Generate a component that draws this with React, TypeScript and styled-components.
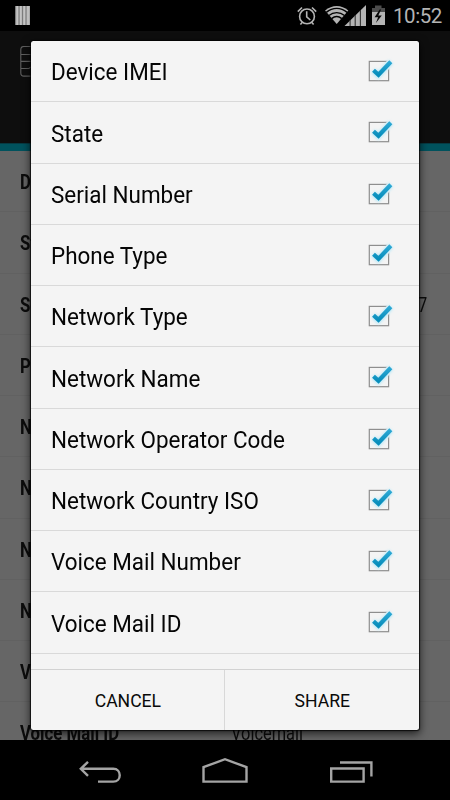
import React from 'react';
import styled, { createGlobalStyle } from 'styled-components';

const GlobalStyle = createGlobalStyle`
  * { box-sizing: border-box; }
  html, body { margin: 0; padding: 0; background: #000; }
  body { overflow: hidden; }
`;

const Screen = styled.div`
  position: relative;
  width: 450px;
  height: 800px;
  overflow: hidden;
  display: flex;
  flex-direction: column;
  background: #000;
  font-family: Roboto, "Noto Sans", sans-serif;
`;

const StatusBar = styled.header`
  height: 31px;
  flex: none;
  display: flex;
  justify-content: space-between;
  color: #b4b4b4;
`;

const StatusGroup = styled.div`
  display: flex;
  height: 31px;
`;

const Clock = styled.span`
  width: 57px;
  font-size: 20.5px;
  line-height: 33px;
  letter-spacing: -0.45px;
  white-space: nowrap;
`;

const ActionBar = styled.div`
  height: 112px;
  flex: none;
  background: #0e0e0e;
  padding: 15px 0 0 20px;
`;

const TabIndicator = styled.div`
  height: 8px;
  flex: none;
  background: #00525d;
  border-top: 1px solid #063a42;
`;

const Content = styled.main`
  height: 589px;
  flex: none;
  overflow: hidden;
  background: #666;
`;

const InfoRow = styled.div`
  display: grid;
  grid-template-columns: 211px 1fr;
  align-items: center;
  height: 61.25px;
  padding: 2px 0 0 20px;
  border-bottom: 1px solid #616161;
  color: #0c0c0c;
  font-size: 20px;
  white-space: nowrap;
`;

const InfoLabel = styled.span`
  font-weight: 700;
  transform: scaleX(0.84);
  transform-origin: left;
`;

const InfoValue = styled.span<{ $end?: boolean }>`
  transform: scaleX(0.82);
  transform-origin: ${(p) => (p.$end ? 'right' : 'left')};
  justify-self: ${(p) => (p.$end ? 'end' : 'start')};
  margin-right: ${(p) => (p.$end ? '23px' : '0')};
`;

const NavBar = styled.nav`
  height: 60px;
  flex: none;
  background: #000;
`;

const Dialog = styled.section`
  position: absolute;
  left: 31.4px;
  top: 41px;
  width: 387.8px;
  height: 689px;
  display: flex;
  flex-direction: column;
  overflow: hidden;
  border-radius: 2.5px;
  background: #f4f4f4;
  box-shadow: 0 0 1px 1px rgba(0, 0, 0, 0.75), 0 3px 8px 1px rgba(0, 0, 0, 0.65);
`;

const OptionList = styled.div`
  height: 628px;
  flex: none;
  overflow: hidden;
`;

const Option = styled.label`
  display: flex;
  align-items: center;
  justify-content: space-between;
  height: 61.25px;
  padding: 1px 24px 0 20px;
  border-bottom: 1.3px solid #d9d9d9;
  color: #050505;
  font-size: 23.2px;
  line-height: 28px;
  white-space: nowrap;
`;

const OptionText = styled.span`
  padding-top: 1.4px;
  transform: scaleX(0.968);
  transform-origin: left;
`;

const Actions = styled.footer`
  display: grid;
  grid-template-columns: 194px 1fr;
  height: 61px;
  border-top: 1px solid #d2d2d2;
`;

const ActionButton = styled.button`
  border: 0;
  border-right: 1px solid #d8d8d8;
  padding: 2px 0 0;
  background: transparent;
  color: #090909;
  font: 400 17.6px Roboto, sans-serif;
  &:last-child { border-right: 0; }
`;

const NotificationIcon = () => (
  <svg width="40" height="31">
    <rect x="15" y="6" width="15" height="19" fill="#aaa" />
    <path d="M15.5 6v19M19 6v19M22.5 6v19M26 6v19" stroke="#777" strokeWidth=".9" />
    <path d="M17.3 6v19M20.8 6v19M24.3 6v19M28 6v19" stroke="#c4c4c4" strokeWidth="1.6" />
  </svg>
);

const StatusIcons = () => (
  <svg width="97" height="31" viewBox="296 0 97 31">
    <g fill="none" stroke="#b4b4b4" strokeWidth="1.6">
      <circle cx="307" cy="16.4" r="7.4" />
      <path d="M306.7 11.3v5.5l3.6 3.2M297.8 11.6l4.2-4.1M312 7.5l4.2 4.1M302.4 22.3l-2 2.3M311.6 22.3l2 2.3" />
    </g>
    <path d="M336.7 24 325.1 10.6C332 4.4 341.4 4.4 348.3 10.6Z" fill="#b4b4b4" />
    <g fill="none" stroke="#000" strokeWidth="1.4">
      <path d="M326.3 12.4C332.7 7 340.7 7 347.1 12.4M328.9 15.5C333.6 11.6 339.8 11.6 344.5 15.5M331.6 18.6C334.8 15.9 338.6 15.9 341.8 18.6" />
    </g>
    <path d="M344.5 26 366 5v21Z" fill="#b4b4b4" />
    <path d="M350.1 20v6M355.2 15v11M360.4 10v16" stroke="#333" strokeWidth="1.1" />
    <path d="M372 8h3V5.5h6.5V8H385v4h-13Z" fill="#4c4c4c" />
    <path d="M372 12h13v13h-13Z" fill="#b4b4b4" />
    <path d="m379.7 9.5-5.1 7.8h3.5l-2.2 5.8 5.9-7.6h-3.5l2.8-6Z" fill="#080808" />
  </svg>
);

const AppIcon = () => (
  <svg width="30" height="32" viewBox="20 46 30 32" fill="none" stroke="#606060" strokeWidth="1.1">
    <path d="M36 46.5H24q-3.2 0-3.2 3.2v23.2q0 3.2 3.2 3.2h12M21 54.5h10l2 2M21 61.4h15M21 68.5h8l2-1.5" />
  </svg>
);

const CheckBox = () => (
  <svg width="29" height="29" viewBox="366 57 29 29">
    <defs>
      <filter id="checkGlow" x="-30%" y="-40%" width="160%" height="180%">
        <feGaussianBlur stdDeviation="1.5" />
      </filter>
      <linearGradient id="checkBlue" x1="0" y1="0" x2="0" y2="1">
        <stop offset="0" stopColor="#2ea9d5" />
        <stop offset="1" stopColor="#078dbb" />
      </linearGradient>
    </defs>
    <rect x="369.3" y="61.4" width="19.3" height="19.3" fill="none" stroke="#8e8e8e" strokeWidth="1.2" />
    <path d="m373.4 70.5 5 4.8L390.8 61.8" fill="none" stroke="#f4f4f4" strokeWidth="7" />
    <path d="m373.4 70.5 5 4.8L390.8 61.8" fill="none" stroke="#aee6f8" strokeWidth="5.5" filter="url(#checkGlow)" />
    <path d="m373.5 70.2 5 4.6L390.8 61.8" fill="none" stroke="url(#checkBlue)" strokeWidth="4.2" />
  </svg>
);

const NavIcons = () => (
  <svg width="450" height="60" viewBox="0 740 450 60" fill="none" stroke="#a4a4a4" strokeWidth="2.4">
    <path d="m88 761.8-7.2 7 7.2 7M81 768.7h32.2c8.7 0 8.7 12.9 0 12.9H98" />
    <path d="M203.5 781.6v-14.4L225 759.2l21.5 8v14.4Z" />
    <path d="M331.2 768.5h32.4v13.1h-32.4ZM340 762.5h31.4v14" />
  </svg>
);

const details: { label: string; value?: string; end?: boolean }[] = [
  { label: 'Device IMEI' },
  { label: 'State' },
  { label: 'Serial Number', value: '7', end: true },
  { label: 'Phone Type' },
  { label: 'Network Type' },
  { label: 'Network Name' },
  { label: 'Network Operator Code' },
  { label: 'Network Country ISO' },
  { label: 'Voice Mail Number' },
  { label: 'Voice Mail ID', value: 'Voicemail' },
];

const options = details.map((d) => d.label);

export default function App() {
  return (
    <>
      <GlobalStyle />
      <Screen>
        <StatusBar>
          <NotificationIcon />
          <StatusGroup>
            <StatusIcons />
            <Clock>10:52</Clock>
          </StatusGroup>
        </StatusBar>
        <ActionBar><AppIcon /></ActionBar>
        <TabIndicator />
        <Content>
          {details.map((d) => (
            <InfoRow key={d.label}>
              <InfoLabel>{d.label}</InfoLabel>
              {d.value && <InfoValue $end={d.end}>{d.value}</InfoValue>}
            </InfoRow>
          ))}
        </Content>
        <NavBar><NavIcons /></NavBar>
        <Dialog>
          <OptionList>
            {options.map((name) => (
              <Option key={name}>
                <OptionText>{name}</OptionText>
                <CheckBox />
              </Option>
            ))}
          </OptionList>
          <Actions>
            <ActionButton>CANCEL</ActionButton>
            <ActionButton>SHARE</ActionButton>
          </Actions>
        </Dialog>
      </Screen>
    </>
  );
}
